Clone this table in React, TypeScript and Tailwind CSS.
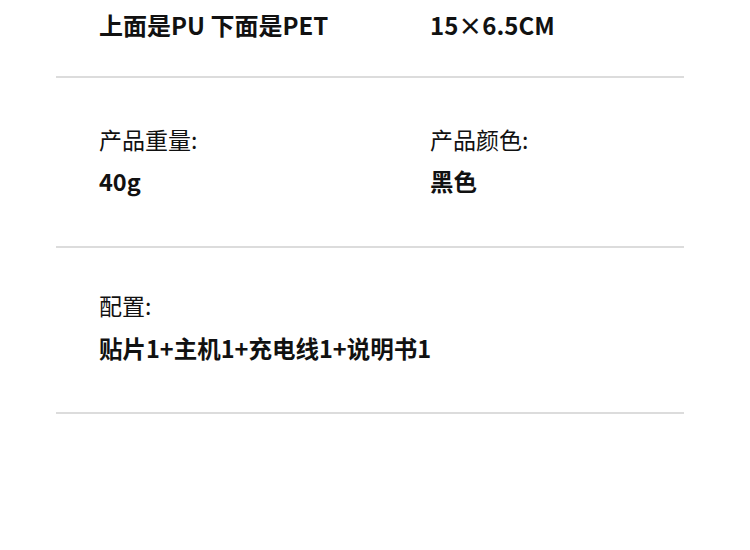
export default function App() {
  const font = { fontFamily: '"Noto Sans CJK SC", "Noto Sans", sans-serif' };
  return (
    <div className="w-[750px] h-[550px] bg-white text-[#111]" style={font}>
      <div className="ml-[56px] w-[628px]">
        <div className="h-[78px] border-b-2 border-[#dcdcdc] flex pl-[43px] pt-[8px]">
          <div className="w-[331px] text-[24px] leading-[34px] font-bold">上面是PU 下面是PET</div>
          <div className="text-[24px] leading-[34px] font-bold">15×6.5CM</div>
        </div>
        <div className="h-[170px] border-b-2 border-[#dcdcdc] flex pl-[43px] pt-[44px]">
          <div className="w-[331px] flex flex-col gap-[8px]">
            <div className="text-[23px] leading-[34px]">产品重量:</div>
            <div className="text-[23.5px] leading-[34px] font-bold">40g</div>
          </div>
          <div className="flex flex-col gap-[8px]">
            <div className="text-[23px] leading-[34px]">产品颜色:</div>
            <div className="text-[23.5px] leading-[34px] font-bold">黑色</div>
          </div>
        </div>
        <div className="h-[166px] border-b-2 border-[#dcdcdc] flex pl-[43px] pt-[40px]">
          <div className="flex flex-col gap-[9px]">
            <div className="text-[23px] leading-[34px]">配置:</div>
            <div className="text-[23.5px] leading-[34px] font-bold">贴片1+主机1+充电线1+说明书1</div>
          </div>
        </div>
      </div>
    </div>
  );
}
